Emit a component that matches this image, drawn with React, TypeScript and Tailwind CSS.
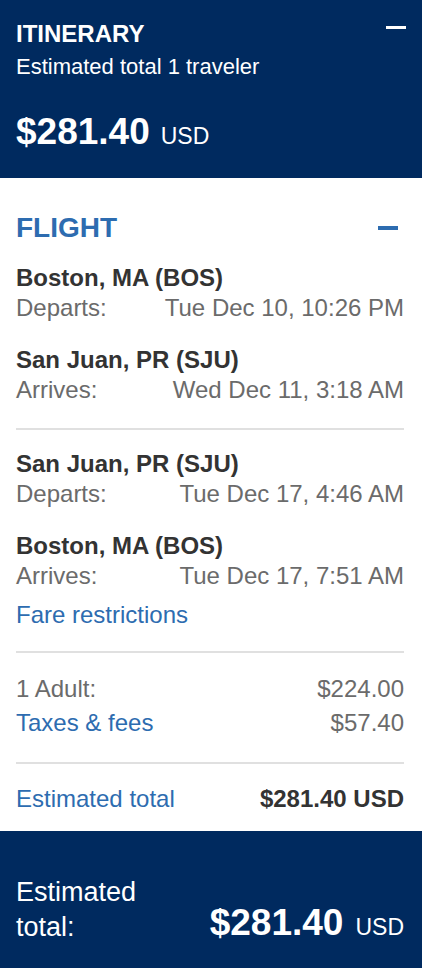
const FONT = { fontFamily: '"Liberation Sans", Arial, Helvetica, sans-serif' };

type Leg = { city: string; label: string; when: string };

const OUTBOUND: Leg[] = [
  { city: "Boston, MA (BOS)", label: "Departs:", when: "Tue Dec 10, 10:26 PM" },
  { city: "San Juan, PR (SJU)", label: "Arrives:", when: "Wed Dec 11, 3:18 AM" },
];

const RETURN: Leg[] = [
  { city: "San Juan, PR (SJU)", label: "Departs:", when: "Tue Dec 17, 4:46 AM" },
  { city: "Boston, MA (BOS)", label: "Arrives:", when: "Tue Dec 17, 7:51 AM" },
];

function LegRow({ leg, first }: { leg: Leg; first: boolean }) {
  return (
    <div className={first ? "mt-[19px]" : "mt-[22px]"}>
      <div className="text-[24px] font-bold leading-[30px] text-[#333333]">{leg.city}</div>
      <div className="flex justify-between text-[24px] leading-[30px] text-[#6b6b6b]">
        <span>{leg.label}</span>
        <span>{leg.when}</span>
      </div>
    </div>
  );
}

function Divider({ className = "" }: { className?: string }) {
  return <div className={`h-[2px] bg-[#e0e0e0] ${className}`} />;
}

function Price({ gap }: { gap: string }) {
  return (
    <div className={`flex items-baseline ${gap}`}>
      <span className="text-[37px] font-bold leading-[44px]">$281.40</span>
      <span className="text-[23px] leading-none">USD</span>
    </div>
  );
}

export default function App() {
  return (
    <div className="w-[422px] min-h-[968px] bg-white" style={FONT}>
      {/* itinerary header */}
      <header className="bg-[#002a5f] pl-4 pr-4 pt-[19px] pb-[24px] text-white">
        <div className="flex items-start justify-between">
          <h1 className="text-[24px] font-bold leading-[30px]">ITINERARY</h1>
          <span className="mt-[7px] block h-[3px] w-[20px] bg-white" aria-hidden />
        </div>
        <p className="mt-[4px] text-[22px] leading-[28px]">Estimated total 1 traveler</p>
        <div className="mt-[29px]">
          <Price gap="gap-[11px]" />
        </div>
      </header>

      {/* flight details */}
      <section className="pl-4 pr-[18px] pt-[34px] pb-[17px]">
        <div className="flex items-center justify-between">
          <h2 className="text-[28px] font-bold leading-[32px] text-[#2d6cb0]">FLIGHT</h2>
          <span className="mr-[6px] block h-[4px] w-[20px] bg-[#2d6cb0]" aria-hidden />
        </div>

        {OUTBOUND.map((leg, i) => (
          <LegRow key={leg.city + i} leg={leg} first={i === 0} />
        ))}

        <Divider className="mt-[23px]" />

        {RETURN.map((leg, i) => (
          <LegRow key={leg.city + i} leg={leg} first={i === 0} />
        ))}

        <a href="#" className="mt-[9px] block text-[24px] leading-[30px] text-[#2d6cb0]">
          Fare restrictions
        </a>

        <Divider className="mt-[21px]" />

        <div className="mt-[21px] flex justify-between text-[24px] leading-[30px] text-[#6b6b6b]">
          <span>1 Adult:</span>
          <span>$224.00</span>
        </div>
        <div className="mt-[4px] flex justify-between text-[24px] leading-[30px]">
          <a href="#" className="text-[#2d6cb0]">
            Taxes &amp; fees
          </a>
          <span className="text-[#6b6b6b]">$57.40</span>
        </div>

        <Divider className="mt-[24px]" />

        <div className="mt-[20px] flex justify-between text-[24px] leading-[30px]">
          <a href="#" className="text-[#2d6cb0]">
            Estimated total
          </a>
          <span className="font-bold text-[#333333]">$281.40 USD</span>
        </div>
      </section>

      {/* sticky total */}
      <footer className="flex items-end justify-between bg-[#002a5f] pl-4 pr-[18px] pt-[44px] pb-[24px] text-white">
        <div className="text-[27px] leading-[35px]">
          Estimated
          <br />
          total:
        </div>
        <Price gap="gap-[12px]" />
      </footer>
    </div>
  );
}
